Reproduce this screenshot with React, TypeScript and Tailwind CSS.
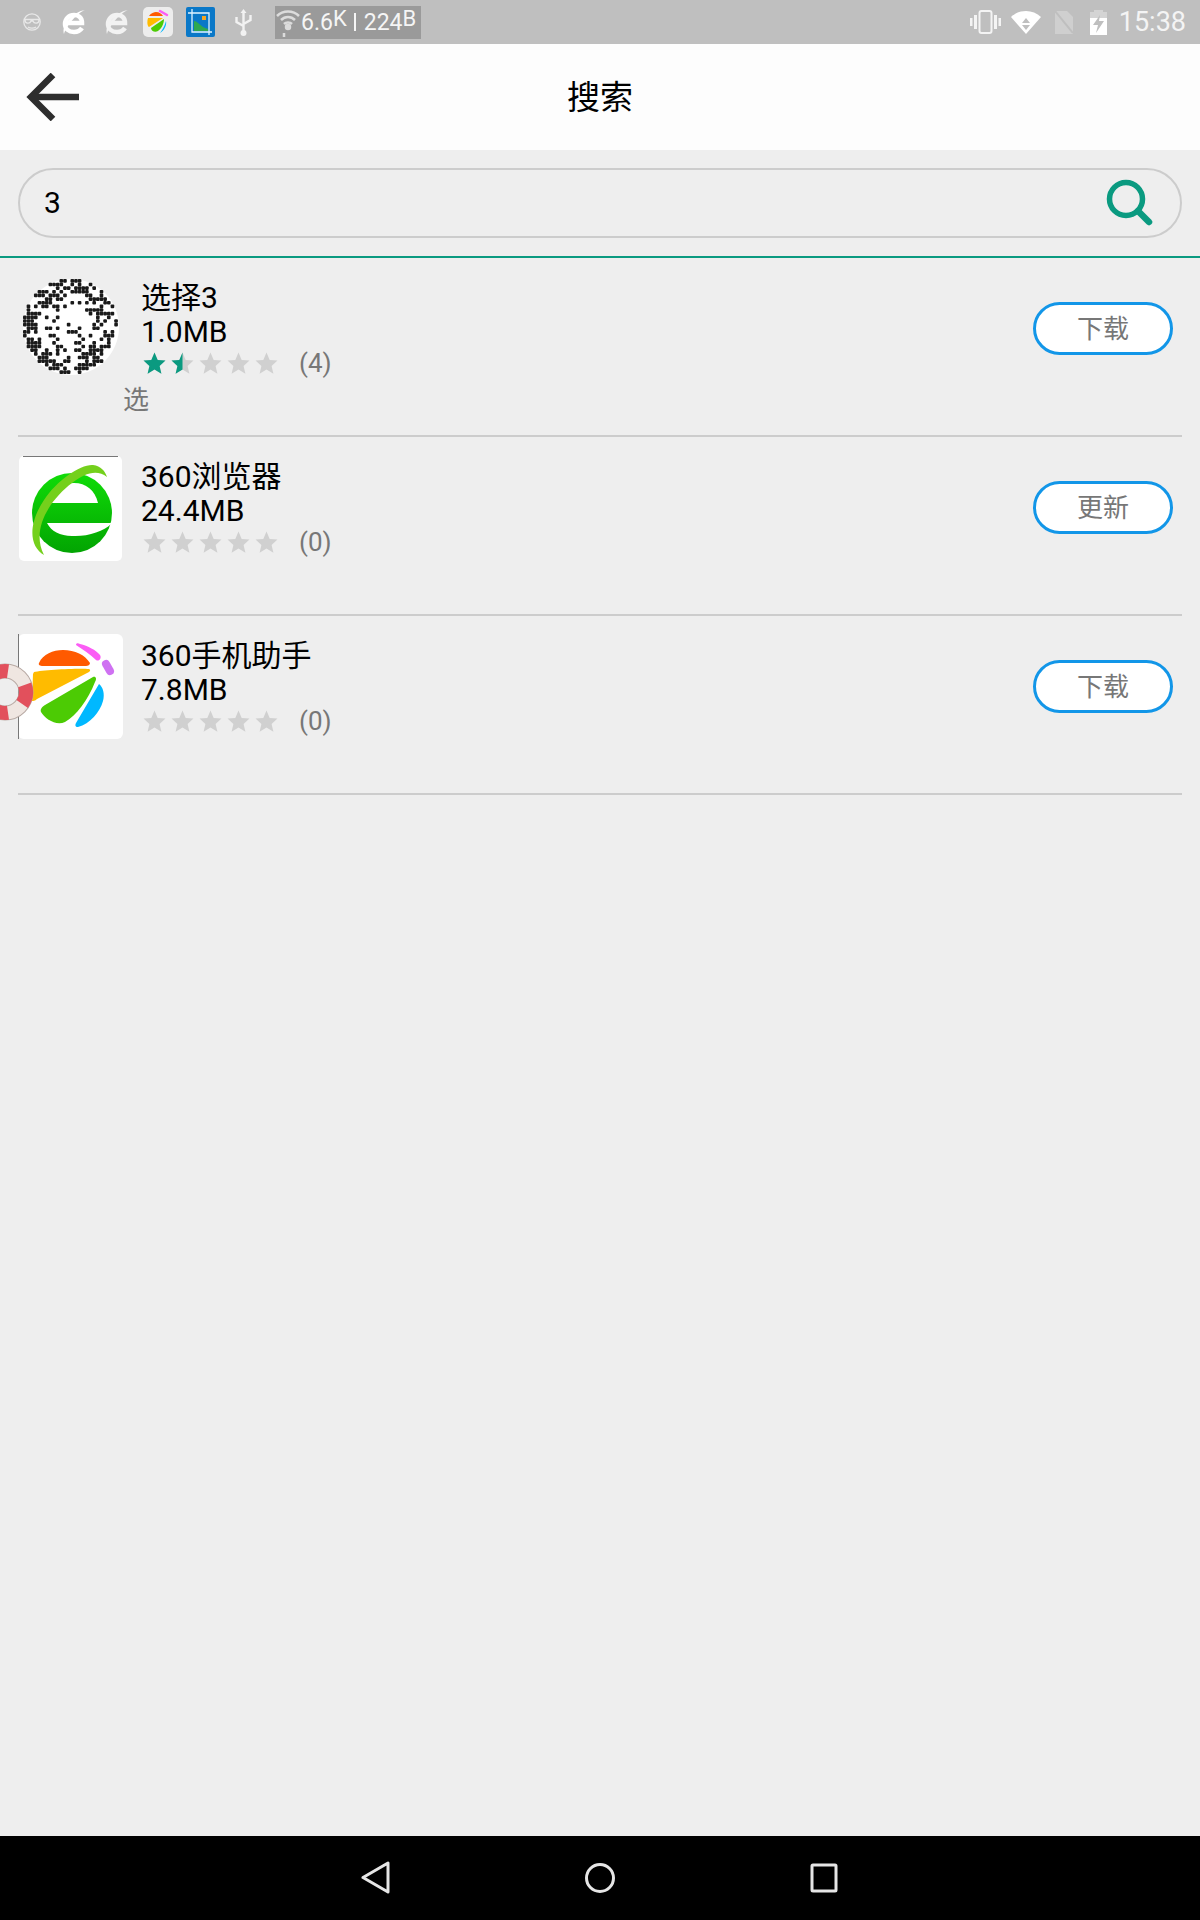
const FONT = "font-['Roboto','Noto_Sans_CJK_SC',sans-serif]";

type App = {
  name: string;
  size: string;
  rating: number;
  count: number;
  action: string;
  icon: React.ReactNode;
  note?: string;
};

function Star({ fill }: { fill: number }) {
  const id = `star-${fill}`;
  const d = "M11.5 0.5l3.2 7.4 7.8.7-5.9 5.3 1.8 7.9-6.9-4.2-6.9 4.2 1.8-7.9L0.5 8.6l7.8-.7z";
  return (
    <svg width="23" height="22" viewBox="0 0 23 22">
      <path d={d} fill="#d0d0d0" />
      {fill > 0 && (
        <>
          <clipPath id={id}>
            <rect x="0" y="0" width={23 * fill} height="22" />
          </clipPath>
          <path d={d} fill="#0a9a80" clipPath={`url(#${id})`} />
        </>
      )}
    </svg>
  );
}

function Stars({ rating, count }: { rating: number; count: number }) {
  return (
    <div className="mt-[3px] flex h-[24px] items-center">
      <div className="flex w-[137px] gap-[5px] pl-[2px]">
        {[0, 1, 2, 3, 4].map((i) => (
          <Star key={i} fill={Math.max(0, Math.min(1, rating - i))} />
        ))}
      </div>
      <span className="ml-[21px] text-[26px] leading-none text-[#777777]">({count})</span>
    </div>
  );
}

function DotBadge() {
  const cells: React.ReactNode[] = [];
  const n = 26;
  for (let y = 0; y < n; y++) {
    for (let x = 0; x < n; x++) {
      const dx = x - 12.5;
      const dy = y - 12.5;
      const r = Math.sqrt(dx * dx + dy * dy);
      if (r > 12.8) continue;
      const h = Math.abs(Math.sin(x * 12.9898 + y * 78.233) * 43758.5453) % 1;
      const limit = r > 9 ? 0.56 : r > 6 ? 0.3 : 0.12;
      if (h < limit) {
        cells.push(<rect key={`${x}-${y}`} x={x * 3.65} y={y * 3.65} width="3.65" height="3.65" rx="1" fill="#1a1a1a" />);
      }
    }
  }
  return (
    <svg width="96" height="96" viewBox="0 0 96 96" className="mt-[21px] ml-[5px]">
      <circle cx="48" cy="48" r="48" fill="#fff" />
      {cells}
    </svg>
  );
}

function BrowserIcon() {
  return (
    <svg width="103" height="105" viewBox="0 0 103 105" className="mt-[19px] ml-[1px]">
      <defs>
        <linearGradient id="eg" x1="0" y1="0" x2="0" y2="1">
          <stop offset="0" stopColor="#10dc08" />
          <stop offset="1" stopColor="#02a402" />
        </linearGradient>
      </defs>
      <rect width="103" height="105" rx="5" fill="#fff" />
      <rect x="4" width="95" height="1" fill="#777" />
      <circle cx="53" cy="57" r="40" fill="url(#eg)" />
      <path d="M31 47C34 33 44 27 55 27C67 27 76 34 79 47Z" fill="#fff" />
      <path d="M28 67H96V68H92C85 75 68 81 53 80C41 80 32 75 28 67Z" fill="#fff" />
      <path d="M25 99C10 90 9 68 25 44C38 24 62 8 74 9C82 10 86 15 88 21C78 13 66 17 53 27C33 42 11 72 25 99Z" fill="#74d01c" />
    </svg>
  );
}

function AssistantIcon() {
  return (
    <svg width="105" height="105" viewBox="0 0 105 105" className="mt-[18px]">
      <rect width="105" height="105" rx="6" fill="#fff" />
      <rect width="1" height="105" fill="#777" />
      <path d="M21 29C25 20 35 16 45 16C57 16 67 21 72 29C72 31 70 32 68 32H25C22 32 20 31 21 29Z" fill="#ff5a00" />
      <path d="M16 38C25 36 60 34 71 35C73 36 72 37 71 38L19 65C17 67 15 67 14 67L15 40Z" fill="#ffbb00" />
      <path d="M75 43C78 42 79 45 77 48C70 66 58 82 47 88C38 92 27 85 23 78C22 75 24 73 27 71Z" fill="#4ccb04" />
      <path d="M81 50C85 53 87 60 85 67C82 78 72 90 60 93C57 93 57 91 58 89Z" fill="#00b8ff" />
      <path d="M58 11C58 9 60 9 62 10C70 12 78 16 82 21C84 24 81 28 78 26C72 20 64 15 58 11Z" fill="#fb5cf5" />
      <path d="M88 30L92 37" stroke="#cf71f2" strokeWidth="8" strokeLinecap="round" />
    </svg>
  );
}

const apps: App[] = [
  { name: "选择3", size: "1.0MB", rating: 1.5, count: 4, action: "下载", icon: <DotBadge />, note: "选" },
  { name: "360浏览器", size: "24.4MB", rating: 0, count: 0, action: "更新", icon: <BrowserIcon /> },
  { name: "360手机助手", size: "7.8MB", rating: 0, count: 0, action: "下载", icon: <AssistantIcon /> },
];

function Row({ app }: { app: App }) {
  return (
    <div className="relative mx-[18px] flex h-[179px] border-b-2 border-[#cccccc]">
      <div className="w-[123px] shrink-0">{app.icon}</div>
      <div className="flex-1 pt-[22px] text-black">
        <div className="h-[35px] text-[30px] leading-[35px]">{app.name}</div>
        <div className="h-[33px] text-[30px] leading-[33px]">{app.size}</div>
        <Stars rating={app.rating} count={app.count} />
        {app.note && <div className="-ml-[18px] mt-[10px] text-[26px] leading-[30px] text-[#777777]">{app.note}</div>}
      </div>
      <button
        type="button"
        className="mt-[44px] mr-[9px] h-[53px] w-[140px] rounded-full border-[3px] border-[#1296e8] bg-white text-[26px] leading-none text-[#777777]"
      >
        {app.action}
      </button>
    </div>
  );
}

function StatusLeft() {
  return (
    <div className="flex items-center">
      <svg width="22" height="18" viewBox="0 0 22 18" className="ml-[21px]" fill="none" stroke="#e8e8e8" strokeWidth="1.3">
        <circle cx="11" cy="9" r="8.2" />
        <path d="M3 6.5H19M4 7C4 11 9 11 10 8H12C13 11 18 11 18 7" />
        <path d="M7 14C9 15.5 13 15.5 15 14" />
      </svg>
      <svg width="24" height="26" viewBox="0 0 24 26" className="ml-[19px]" fill="none">
        <path d="M3 14H20C20 8 16 6 12 6C7 6 3 10 3 15C3 20 7 23 12 23C15 23 18 22 20 19" stroke="#fff" strokeWidth="4.5" />
        <path d="M2 25C-1 18 10 3 23 1C17 3 5 15 2 25Z" fill="#fff" />
      </svg>
      <svg width="24" height="26" viewBox="0 0 24 26" className="ml-[19px]" fill="none">
        <path d="M3 14H20C20 8 16 6 12 6C7 6 3 10 3 15C3 20 7 23 12 23C15 23 18 22 20 19" stroke="#f2f2f2" strokeWidth="4.5" />
        <path d="M2 25C-1 18 10 3 23 1C17 3 5 15 2 25Z" fill="#f2f2f2" />
      </svg>
      <svg width="30" height="30" viewBox="0 0 30 30" className="ml-[14px]">
        <rect width="30" height="30" rx="5" fill="#ededed" />
        <path d="M6 9C8 6 11 5 13 5C16 5 19 7 20 9Z" fill="#ff5a00" />
        <path d="M5 11H20L6 20C4 19 4 14 5 11Z" fill="#ffbb00" />
        <path d="M21 12L8 21C8 24 12 26 15 24C18 22 21 17 21 12Z" fill="#4ccb04" />
        <path d="M23 14C24 18 21 24 17 26C20 22 22 18 23 14Z" fill="#00b8ff" />
        <path d="M17 4L24 8" stroke="#fb5cf5" strokeWidth="2.5" strokeLinecap="round" />
      </svg>
      <svg width="29" height="30" viewBox="0 0 29 30" className="ml-[13px]">
        <rect width="29" height="30" rx="2" fill="#0a78c8" />
        <path d="M6 2V25H26M2 6H23V28" fill="none" stroke="#dff3ff" strokeWidth="1.3" />
        <path d="M8 14C12 14 14 20 22 22V24H8Z" fill="#2fa84f" />
        <rect x="16" y="9" width="4" height="4" fill="#f5a623" />
      </svg>
      <svg width="19" height="27" viewBox="0 0 19 27" className="ml-[19px]" fill="none" stroke="#f2f2f2" strokeWidth="2.4">
        <path d="M9.5 2V24M2.5 8V13L9.5 17M16.5 6V11L9.5 15" />
        <path d="M9.5 0L6.5 4H12.5Z" fill="#f2f2f2" stroke="none" />
        <circle cx="9.5" cy="24" r="3" fill="#f2f2f2" stroke="none" />
      </svg>
      <div className="ml-[22px] flex h-[33px] w-[146px] items-center bg-[#9a9a9a] text-[23px] leading-none text-[#f5f5f5]">
        <svg width="26" height="30" viewBox="0 0 26 30" fill="none" stroke="#dcdcdc" strokeWidth="2.5" className="shrink-0">
          <path d="M2 9C8 3 18 3 24 9M6 13C10 9 16 9 20 13M9 17C11 15 15 15 17 17" />
          <circle cx="13" cy="20" r="2" fill="#dcdcdc" />
          <path d="M9 26V30" />
        </svg>
        <span>6.6</span>
        <span className="relative -top-[3px] text-[22px]">K</span>
        <span className="ml-[7px] mr-[8px] h-[18px] w-[2px] shrink-0 bg-[#f5f5f5]" />
        <span>224</span>
        <span className="relative -top-[3px] text-[22px]">B</span>
      </div>
    </div>
  );
}

function StatusRight() {
  return (
    <div className="flex items-center">
      <svg width="31" height="24" viewBox="0 0 31 24" fill="#f4f4f4">
        <rect x="0" y="8" width="2.5" height="8" />
        <rect x="4" y="5" width="3" height="14" />
        <rect x="9.5" y="1" width="12" height="22" rx="2" fill="none" stroke="#f4f4f4" strokeWidth="2" />
        <rect x="24" y="5" width="3" height="14" />
        <rect x="28.5" y="8" width="2.5" height="8" />
      </svg>
      <svg width="30" height="23" viewBox="0 0 30 23" className="ml-[10px]">
        <path d="M0 6C8 -2 22 -2 30 6L15 23Z" fill="#fff" />
        <path d="M15 7L19 12H11Z M11 14H19L15 19Z" fill="#bfbfbf" />
      </svg>
      <svg width="18" height="23" viewBox="0 0 18 23" className="ml-[14px]">
        <path d="M0 0H12L18 6V23H0Z" fill="#cfcfcf" />
        <path d="M0 0L18 22" stroke="#bfbfbf" strokeWidth="2" />
      </svg>
      <svg width="17" height="25" viewBox="0 0 17 25" className="ml-[17px]">
        <rect x="4" y="0" width="9" height="3" fill="#d4d4d4" />
        <rect x="0" y="2" width="17" height="6" fill="#d4d4d4" />
        <rect x="0" y="8" width="17" height="17" fill="#fff" />
        <path d="M10 5L3 15H8L6 23L14 11H9Z" fill="#bfbfbf" />
      </svg>
      <span className="ml-[12px] mr-[14px] text-[27px] leading-none text-[#f4f4f4]">15:38</span>
    </div>
  );
}

function Lifebuoy() {
  return (
    <svg width="34" height="58" viewBox="0 0 34 58" className="absolute left-0 top-[663px]" fill="none">
      <circle cx="5" cy="29" r="21" stroke="#b8aaa4" strokeWidth="15" />
      <circle cx="5" cy="29" r="21" stroke="#efe6e1" strokeWidth="13" />
      <path d="M24.7 21.8A21 21 0 0 1 22.2 41" stroke="#e2505c" strokeWidth="14" />
      <path d="M-5 10.5A21 21 0 0 1 8 8.2" stroke="#e2505c" strokeWidth="14" />
      <path d="M-5 47.5A21 21 0 0 0 8 49.8" stroke="#e2505c" strokeWidth="14" />
    </svg>
  );
}

export default function App() {
  return (
    <div className={`${FONT} relative flex h-[1920px] w-[1200px] flex-col overflow-hidden bg-[#eeeeee]`}>
      <div className="flex h-[44px] shrink-0 items-center justify-between bg-[#bfbfbf]">
        <StatusLeft />
        <StatusRight />
      </div>

      <div className="relative flex h-[106px] shrink-0 items-center justify-center bg-[#fdfdfd]">
        <svg width="56" height="48" viewBox="0 0 56 48" className="absolute left-[25px] top-[29px]" fill="none" stroke="#2e2e2e" strokeWidth="6.5">
          <path d="M28 2L6 24L28 46" />
          <path d="M6 24H54" />
        </svg>
        <span className="text-[33px] leading-none text-black">搜索</span>
      </div>

      <div className="h-[108px] shrink-0 border-b-2 border-[#0a9a80] pt-[18px]">
        <div className="mx-[18px] flex h-[70px] items-center justify-between rounded-full border-2 border-[#cccccc] pl-[24px] pr-[26px]">
          <span className="-mt-[1px] text-[30px] leading-none text-black">3</span>
          <svg width="48" height="48" viewBox="0 0 48 48" fill="none" stroke="#0a9a80">
            <circle cx="20" cy="20" r="16.5" strokeWidth="5.5" />
            <path d="M32 32L43 43" strokeWidth="6.5" strokeLinecap="round" />
          </svg>
        </div>
      </div>

      {apps.map((app) => (
        <Row key={app.name} app={app} />
      ))}

      <div className="flex-1" />

      <div className="flex h-[84px] shrink-0 items-center bg-black pl-[361px]">
        <svg width="30" height="34" viewBox="0 0 30 34" fill="none" stroke="#e6e6e6" strokeWidth="3" strokeLinejoin="round">
          <path d="M27 2V31L2 16.5Z" />
        </svg>
        <svg width="32" height="32" viewBox="0 0 32 32" fill="none" stroke="#e6e6e6" strokeWidth="3" className="ml-[193px]">
          <circle cx="16" cy="16" r="13.5" />
        </svg>
        <svg width="28" height="30" viewBox="0 0 28 30" fill="none" stroke="#e6e6e6" strokeWidth="3" strokeLinejoin="round" className="ml-[194px]">
          <rect x="2" y="2" width="24" height="26" rx="1" />
        </svg>
      </div>

      <Lifebuoy />
    </div>
  );
}
